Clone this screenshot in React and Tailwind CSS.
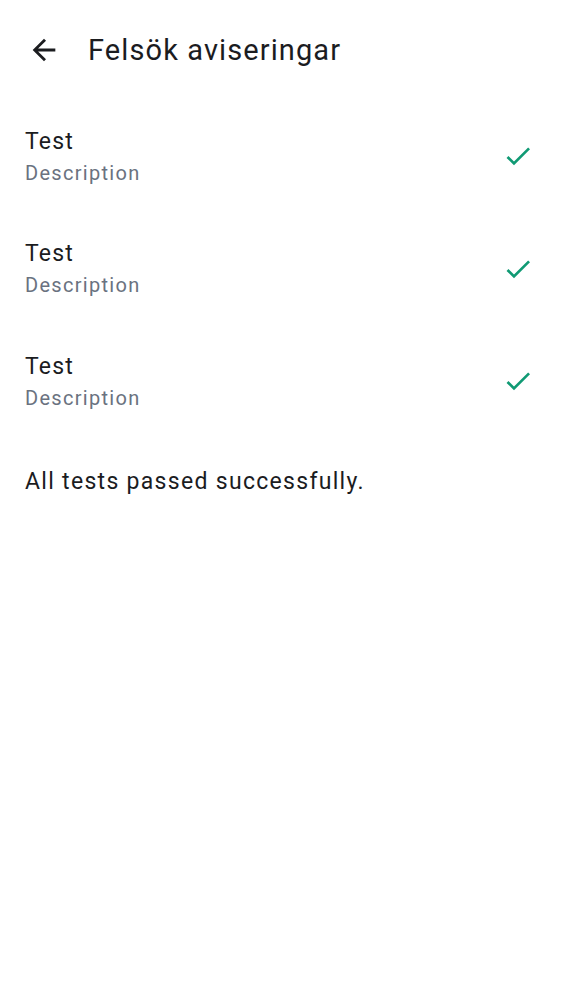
export default function App() {
  const tests = [
    { title: "Test", description: "Description" },
    { title: "Test", description: "Description" },
    { title: "Test", description: "Description" },
  ];

  return (
    <div className="min-h-screen bg-white font-['Roboto',sans-serif] text-[#1b1c1f]">
      {/* Top bar */}
      <div className="flex h-[100px] items-center px-[27px]">
        <svg width="34" height="34" viewBox="0 0 24 24" className="shrink-0">
          <path
            d="M20 11H7.83l5.59-5.59L12 4l-8 8 8 8 1.41-1.41L7.83 13H20v-2z"
            fill="#1b1c1f"
          />
        </svg>
        <h1 className="ml-[27px] text-[29px] font-normal leading-none tracking-[1.1px]">
          Felsök aviseringar
        </h1>
      </div>

      {/* Test results */}
      <div>
        {tests.map((t, i) => (
          <div key={i} className="flex h-[112.5px] items-center justify-between pl-[25px] pr-[28px]">
            <div className="flex flex-col">
              <span className="text-[23px] leading-[32px] tracking-[1.2px]">{t.title}</span>
              <span className="mt-[1px] text-[20px] leading-[28px] tracking-[1.3px] text-[#6a7280]">
                {t.description}
              </span>
            </div>
            <svg width="32" height="32" viewBox="0 0 24 24">
              <path
                d="M9 16.17L4.83 12l-1.42 1.41L9 19 21 7l-1.41-1.41z"
                fill="#109a74"
              />
            </svg>
          </div>
        ))}
      </div>

      <p className="mt-[28px] px-[25px] text-[23px] leading-[32px] tracking-[1.3px]">
        All tests passed successfully.
      </p>
    </div>
  );
}
